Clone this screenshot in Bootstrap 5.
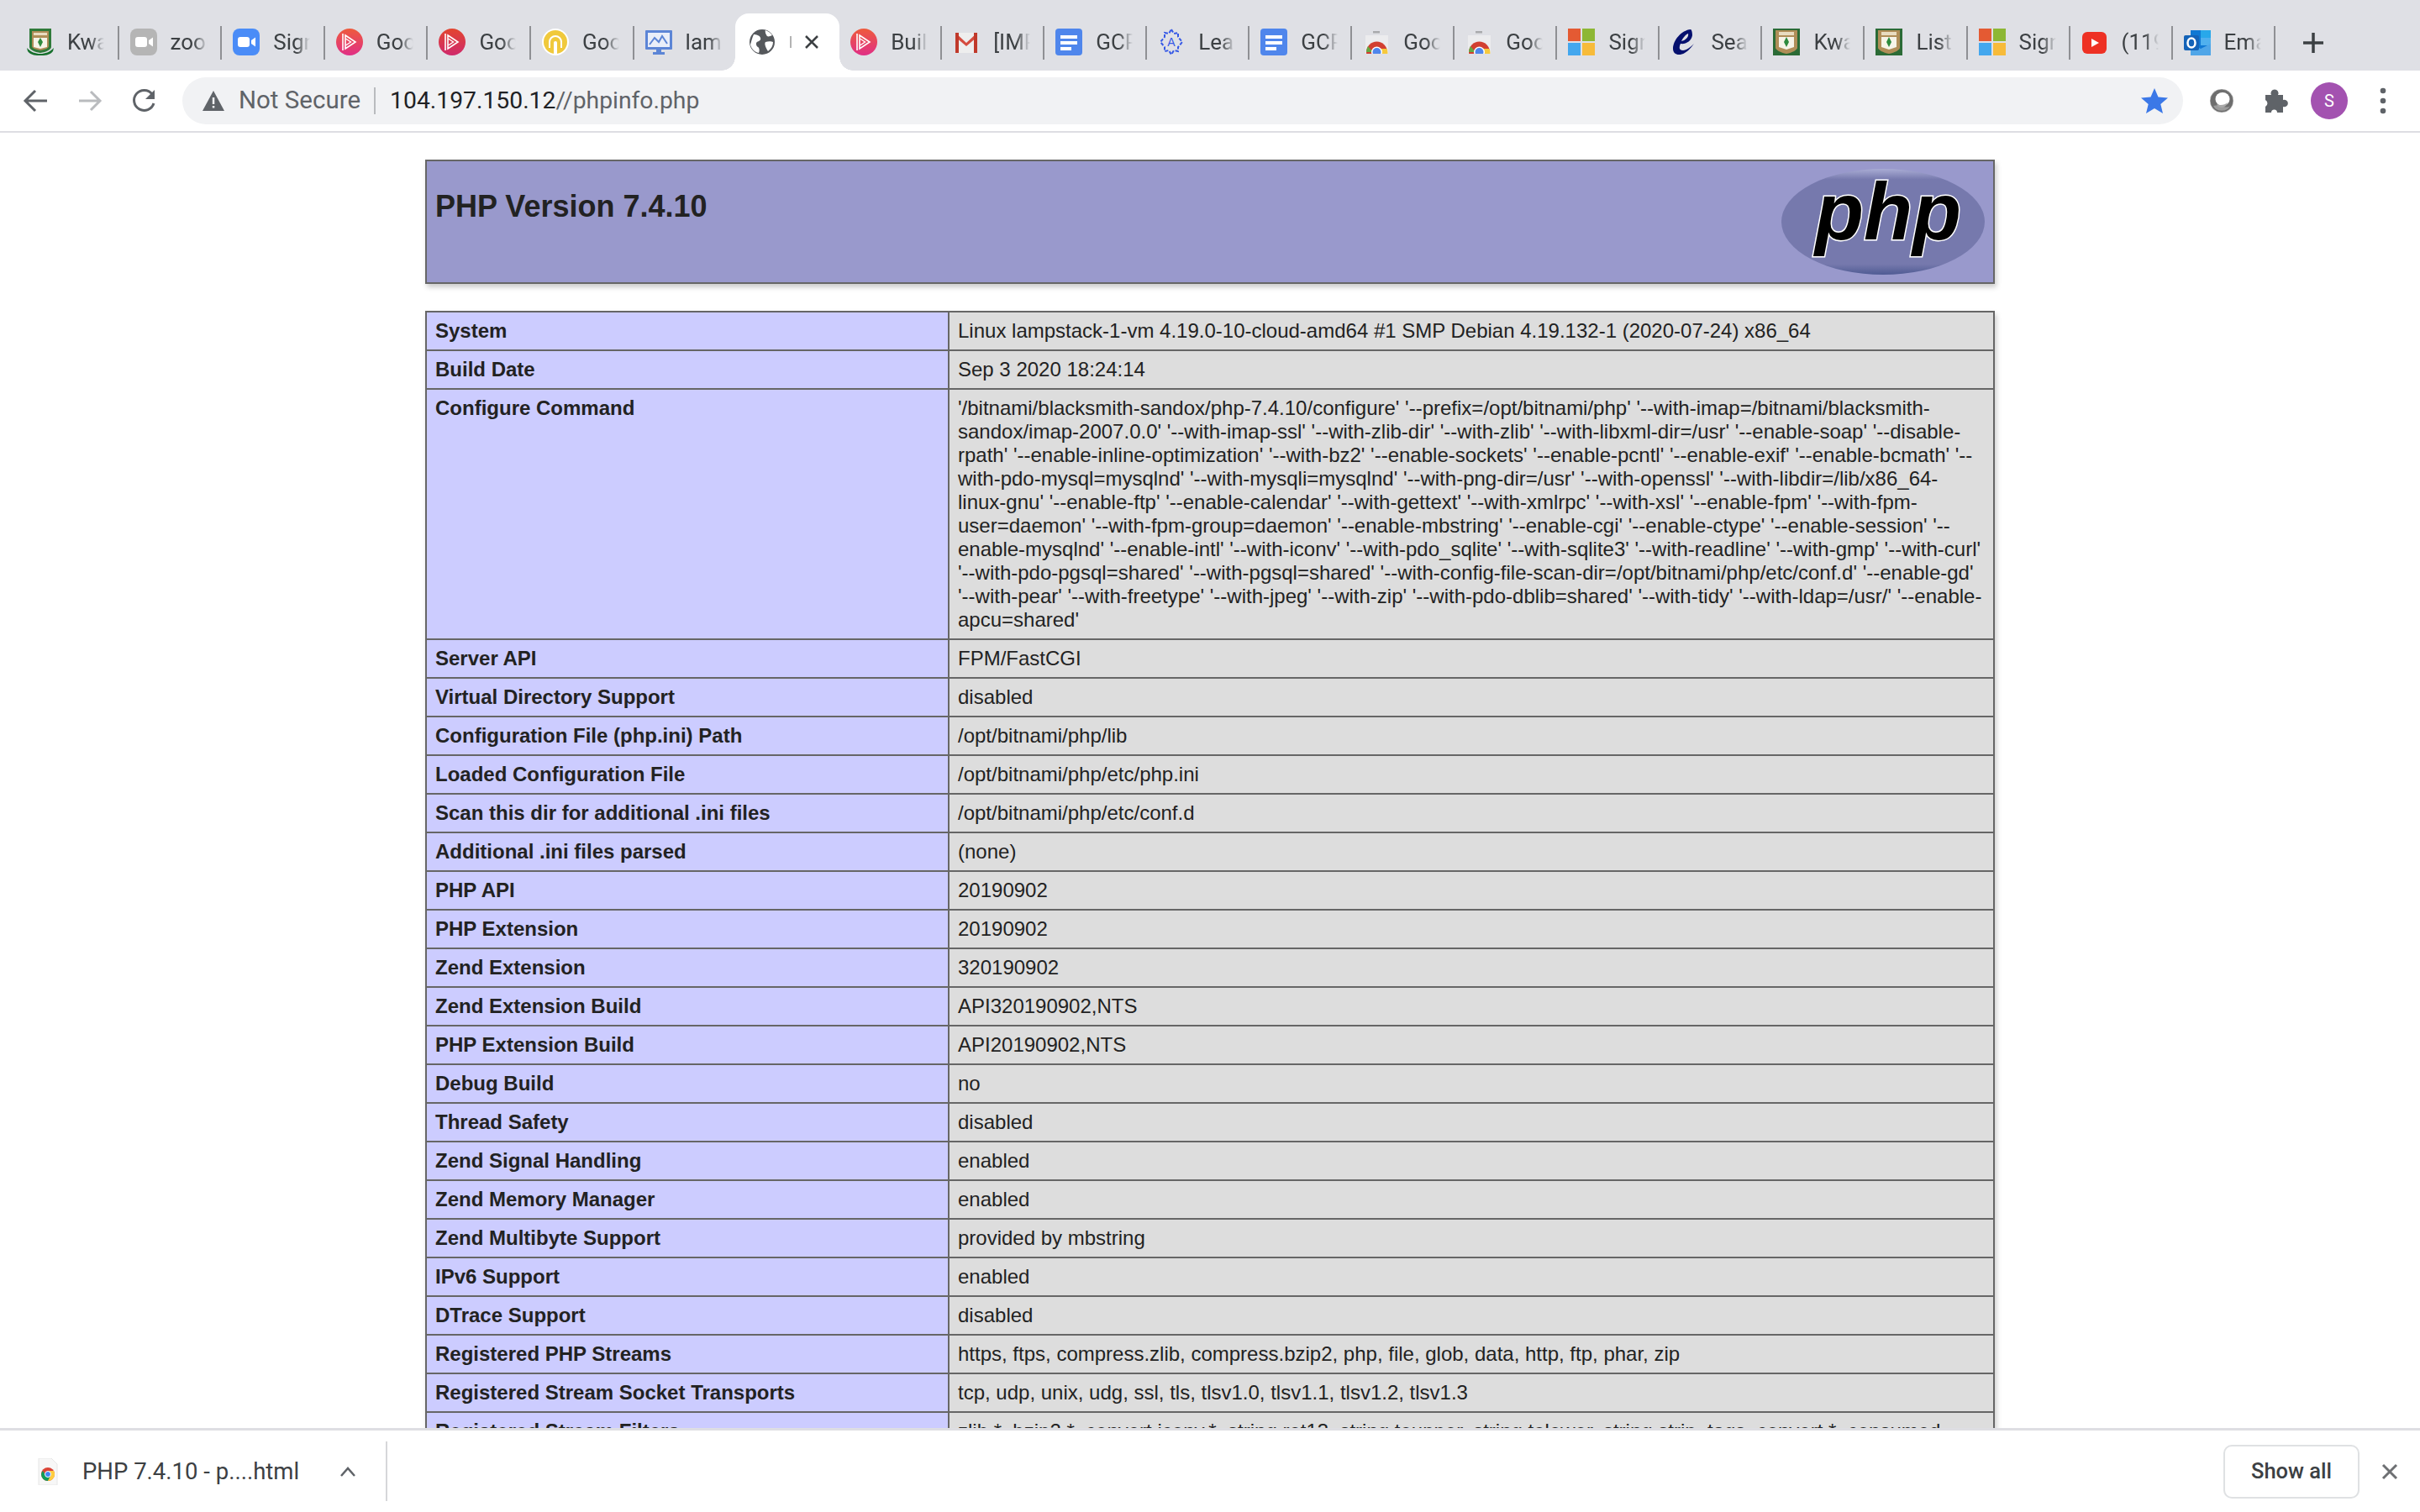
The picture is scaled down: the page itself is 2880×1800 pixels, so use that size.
<!DOCTYPE html>
<html lang="en">
<head>
<meta charset="utf-8">
<title>PHP 7.4.10 - phpinfo()</title>
<link href="https://cdn.jsdelivr.net/npm/bootstrap@5.3.0/dist/css/bootstrap.min.css" rel="stylesheet">
<script src="https://cdn.jsdelivr.net/npm/bootstrap@5.3.0/dist/js/bootstrap.bundle.min.js"></script>
<style>
html,body{height:100%;margin:0;overflow:hidden;background:#fff}
body{font-family:"Liberation Sans",Arial,sans-serif;color:#222}
.shell{height:1800px}
.tabstrip{height:84px;background:#dfe0e5;padding:16px 0 0 19px;flex:none}
.tabitem{flex:0 0 120.6px;height:68px;padding-left:13px;gap:16px;position:relative}
.tabitem.on ~ .tabitem{flex-basis:120.04px}
.tabsep{flex:0 0 2px;width:2px;height:40px;margin-top:15px;background:#8f9094}
.tabico{width:32px;height:32px;flex:none;display:block}
.tablabel{width:44px;overflow:hidden;white-space:nowrap;font-size:26px;color:#3c4043;font-family:"Roboto","Liberation Sans",sans-serif;-webkit-mask-image:linear-gradient(90deg,#000 62%,transparent 100%);mask-image:linear-gradient(90deg,#000 62%,transparent 100%)}
.tabitem.on{background:#fff;border-radius:16px 16px 0 0;margin-left:-2px;flex-basis:124px;padding-left:16px;gap:17px}
.tabitem.on::before,.tabitem.on::after{content:"";position:absolute;bottom:0;width:16px;height:16px}
.tabitem.on::before{left:-16px;background:radial-gradient(circle at 0 0,transparent 15.5px,#fff 16px)}
.tabitem.on::after{right:-16px;background:radial-gradient(circle at 100% 0,transparent 15.5px,#fff 16px)}
.tabsep.none{background:transparent}
.newtab{margin-left:32px;margin-top:22px;width:26px;height:26px}
.toolbar{height:74px;flex:none;background:#fff;border-bottom:2px solid #dedee3;padding:8px 0 8px 26px;position:relative}
.navico{width:32px;height:32px;flex:none;display:block}
.navico + .navico{margin-left:33px}
.omni{flex:none;width:2381px;height:56px;background:#f1f2f4;border-radius:28px;margin-left:29px;padding-left:23px;padding-right:18px}
.notsec{font-family:"Roboto","Liberation Sans",sans-serif;font-size:29.5px;color:#5f6368;margin-left:16px;line-height:1}
.omnidiv{width:2px;height:32px;background:#b9bbbe;margin:0 17px 0 16px}
.urltxt{font-family:"Roboto","Liberation Sans",sans-serif;font-size:28.3px;color:#5f6368;line-height:1}
.urltxt b{font-weight:400;color:#202124}
.ringico{margin-left:31px;flex:none}
.puzico{margin-left:33px;flex:none}
.avatar{width:44px;height:44px;border-radius:50%;background:#a352b0;color:#fff;font-size:20px;font-family:"Roboto",sans-serif;margin-left:26px;flex:none}
.dotsico{margin-left:37px;flex:none}
.viewport{flex:1 1 auto;min-height:0;overflow:hidden;background:#fff;padding-top:32px}
.phpwrap{width:1868px;margin:0 auto 0 506px}
.phphead{height:148px;background:#99c;border:2px solid #666;box-shadow:2px 4px 6px #ccc;padding:0 9px 0 10px;margin-bottom:32px}
.phphead h1{font-size:36px;line-height:42px;font-weight:700;margin:0;padding-top:33px;color:#222}
.phptbl{width:1868px;table-layout:fixed;border-collapse:collapse;box-shadow:2px 4px 6px #ccc;font-size:24px;line-height:28px;color:#222}
.phptbl td{border:2px solid #666;padding:8px 10px;vertical-align:baseline;overflow-wrap:break-word}
.phptbl .ekey{width:622px;background:#ccf;font-weight:700}
.phptbl .vval{background:#ddd}
.dlbar{height:100px;flex:none;background:#fff;border-top:3px solid #dedee3;position:relative;padding-left:45px}
.dlname{font-family:"Roboto","Liberation Sans",sans-serif;font-size:27.5px;color:#3c4043;margin-left:29px;white-space:nowrap}
.dlchev{margin-left:48px;flex:none}
.dldiv{width:2px;height:71px;background:#d6d7d9;margin-left:35px}
.showall{width:162px;height:64px;border:2px solid #dfe1e3;border-radius:10px;background:#fff;font-family:"Roboto",sans-serif;font-weight:500;font-size:25.5px;color:#3c4043;padding:0}
.dlclose{margin:0 26px;flex:none}
</style>
</head>
<body>
<svg width="0" height="0" class="d-block position-absolute">
<defs>
<symbol id="i-crest" viewBox="0 0 32 32"><path d="M3 0h26v22c0 3-6 6-13 7-7-1-13-4-13-7z" fill="#2f7a3a"/><path d="M6 3h20v18c0 2-4 4-10 5-6-1-10-3-10-5z" fill="#b08e58"/><rect x="8" y="5" width="16" height="3" fill="#e8dcc0"/><path d="M8 11h16v11l-8 2-8-2z" fill="#f6f4e8"/><path d="M16 11l3 5-3 6-3-6z" fill="#2e8b3e"/><path d="M0 23c5 5 10 7 16 7s11-2 16-7l-1 4c-4 5-10 5-15 5s-11 0-15-5z" fill="#17702d"/></symbol>
<symbol id="i-crest2" viewBox="0 0 32 32"><rect width="32" height="32" fill="#2b6b36"/><path d="M3 2h26v21c0 2-6 6-13 7-7-1-13-5-13-7z" fill="#b08e58"/><rect x="7" y="4" width="18" height="4" fill="#e8dcc0"/><path d="M7 10h18v12l-9 3-9-3z" fill="#f6f4e8"/><path d="M16 10l3 6-3 6-3-6z" fill="#2e8b3e"/></symbol>
<symbol id="i-zoomg" viewBox="0 0 32 32"><rect width="32" height="32" rx="8" fill="#b5b5b5"/><rect x="6" y="10" width="14" height="12" rx="3" fill="#fff"/><path d="M22 14l5-3.500v11L22 18z" fill="#fff"/></symbol>
<symbol id="i-zoomb" viewBox="0 0 32 32"><rect width="32" height="32" rx="8" fill="#4a8cf7"/><rect x="6" y="10" width="14" height="12" rx="3" fill="#fff"/><path d="M22 14l5-3.500v11L22 18z" fill="#fff"/></symbol>
<symbol id="i-plur" viewBox="0 0 32 32"><defs><linearGradient id="gp" x1="0" y1="0" x2="0" y2="1"><stop offset="0" stop-color="#ee5b3c"/><stop offset="1" stop-color="#e02f86"/></linearGradient></defs><circle cx="16" cy="16" r="16" fill="url(#gp)"/><path d="M11 8l12 8-12 8zM8 6v20" fill="none" stroke="#fff" stroke-width="1.600"/><path d="M11.500 12l6 4-6 4" fill="none" stroke="#fff" stroke-width="1.400"/></symbol>
<symbol id="i-plur2" viewBox="0 0 32 32"><defs><linearGradient id="gq" x1="0" y1="0" x2="0" y2="1"><stop offset="0" stop-color="#e2452f"/><stop offset="1" stop-color="#cf2a6c"/></linearGradient></defs><circle cx="16" cy="16" r="16" fill="url(#gq)"/><path d="M11 8l12 8-12 8zM8 6v20" fill="none" stroke="#fff" stroke-width="1.600"/><path d="M11.500 12l6 4-6 4" fill="none" stroke="#fff" stroke-width="1.400"/></symbol>
<symbol id="i-yellow" viewBox="0 0 32 32"><circle cx="16" cy="16" r="16" fill="#fff"/><circle cx="16" cy="16" r="14" fill="#f0c93c"/><path d="M9 23v-7a7 7 0 0 1 14 0v7" fill="none" stroke="#fff" stroke-width="2"/><path d="M14 30V17a2 2 0 0 1 4 0v13z" fill="#fff"/></symbol>
<symbol id="i-mon" viewBox="0 0 32 32"><rect x="0" y="2" width="32" height="23" rx="1" fill="#5c85d6"/><rect x="3" y="5" width="26" height="17" fill="#e9eef9"/><path d="M5 19l6-8 5 5 4-7 6 9" fill="none" stroke="#5c85d6" stroke-width="2"/><rect x="13" y="25" width="6" height="3" fill="#5c85d6"/><rect x="9" y="28" width="14" height="3" fill="#5c85d6"/></symbol>
<symbol id="i-globe" viewBox="0 0 32 32"><circle cx="16" cy="16" r="15" fill="#55585c"/><path d="M6 7c3 0 7 1 8 4s-2 4-4 5-1 5 1 6 2 5 1 7c-5-1-9-5-10-10 1-3 2-8 4-12zM20 2c3 1 6 3 8 6-2 1-5 2-6 1s-3-5-2-7zM20 16c3-1 7-1 9 0 0 4-2 8-6 11-2-3-5-9-3-11z" fill="#fff"/></symbol>
<symbol id="i-gmail" viewBox="0 0 32 32"><path d="M3 5h26v24H3z" fill="#eeeeee"/><path d="M3 5l13 12L29 5v5L16 21 3 10z" fill="#d54c3f"/><path d="M3 5h4v24H3zM25 5h4v24h-4z" fill="#c0392b"/></symbol>
<symbol id="i-doc" viewBox="0 0 32 32"><rect width="32" height="32" rx="4" fill="#4f86ec"/><rect x="6" y="8" width="20" height="4" fill="#fff"/><rect x="6" y="15" width="20" height="4" fill="#fff"/><rect x="6" y="22" width="13" height="4" fill="#fff"/></symbol>
<symbol id="i-lead" viewBox="0 0 32 32"><path d="M16 1l3 5 5-1v5l5 6-5 6v5l-5-1-3 5-3-5-5 1v-5l-5-6 5-6V5l5 1z" fill="none" stroke="#3558e6" stroke-width="2" stroke-dasharray="4 2"/><text x="16" y="21" text-anchor="middle" font-size="14" font-family="Liberation Sans" fill="#3558e6">A</text></symbol>
<symbol id="i-cr" viewBox="0 0 32 32"><rect x="3" y="8" width="27" height="22" fill="#ececee"/><rect x="12" y="3" width="8" height="2.500" fill="#a9aaad"/><clipPath id="crclip"><rect x="3" y="8" width="27" height="22"/></clipPath><g clip-path="url(#crclip)"><circle cx="16.500" cy="28" r="12.500" fill="#d23f31"/><path d="M16.500 28L4 28a12.500 12.500 0 0 1 2-7l6 7v4H4z" fill="#65a844"/><path d="M16.500 24h12a12.500 12.500 0 0 1 .5 8h-8z" fill="#f6c93d"/><circle cx="16.500" cy="28" r="6.500" fill="#fff"/><circle cx="16.500" cy="28" r="5" fill="#4f86ec"/></g></symbol>
<symbol id="i-ms" viewBox="0 0 32 32"><rect width="15" height="15" fill="#e45a33"/><rect x="17" width="15" height="15" fill="#8db735"/><rect y="17" width="15" height="15" fill="#43a7ee"/><rect x="17" y="17" width="15" height="15" fill="#f7bb3a"/></symbol>
<symbol id="i-e" viewBox="0 0 32 32"><path d="M24 1C13 2 3 14 3 24c0 7 7 9 14 5 4-2 8-7 11-11-4 4-9 8-13 8-5 0-5-4-3-8 6 1 13-3 14-10 0-4-1-7-2-7zM13 15c2-4 5-8 8-9 1 4-3 8-8 9z" fill="#05106e"/></symbol>
<symbol id="i-yt" viewBox="0 0 32 32"><rect x="1" y="4" width="29" height="26" rx="6" fill="#ee3124"/><path d="M12 12l9 5-9 5z" fill="#fff"/></symbol>
<symbol id="i-ol" viewBox="0 0 32 32"><rect x="8" y="2" width="24" height="30" fill="#0f78d4"/><rect x="20" y="2" width="12" height="9" fill="#28a8ea"/><rect x="20" y="11" width="12" height="9" fill="#50b0ee"/><path d="M8 18l12 6 12-6v14H8z" fill="#50a6e8"/><rect x="0" y="8" width="18" height="18" rx="2" fill="#1463b8"/><ellipse cx="9" cy="17" rx="4.500" ry="5.500" fill="none" stroke="#fff" stroke-width="2.500"/></symbol>
</defs>
</svg>

<div class="shell d-flex flex-column">
  <div class="tabstrip d-flex align-items-start">
    <div class="tabitem d-flex align-items-center"><svg class="tabico"><use href="#i-crest"/></svg><span class="tablabel">Kwara</span></div><span class="tabsep"></span>
    <div class="tabitem d-flex align-items-center"><svg class="tabico"><use href="#i-zoomg"/></svg><span class="tablabel">zoom</span></div><span class="tabsep"></span>
    <div class="tabitem d-flex align-items-center"><svg class="tabico"><use href="#i-zoomb"/></svg><span class="tablabel">Sign in</span></div><span class="tabsep"></span>
    <div class="tabitem d-flex align-items-center"><svg class="tabico"><use href="#i-plur"/></svg><span class="tablabel">Google</span></div><span class="tabsep"></span>
    <div class="tabitem d-flex align-items-center"><svg class="tabico"><use href="#i-plur2"/></svg><span class="tablabel">Google</span></div><span class="tabsep"></span>
    <div class="tabitem d-flex align-items-center"><svg class="tabico"><use href="#i-yellow"/></svg><span class="tablabel">Google</span></div><span class="tabsep"></span>
    <div class="tabitem d-flex align-items-center"><svg class="tabico"><use href="#i-mon"/></svg><span class="tablabel">lampstack</span></div><span class="tabsep none"></span>
    <div class="tabitem on d-flex align-items-center"><svg class="tabico"><use href="#i-globe"/></svg><svg width="34" height="32" viewBox="0 0 34 32" class="flex-shrink-0" aria-hidden="true"><path d="M1 9v14" stroke="#9a9a9a" stroke-width="1.500"/><path d="M19 9l14 14M33 9L19 23" stroke="#3c4043" stroke-width="2.500"/></svg></div>
    <div class="tabitem d-flex align-items-center"><svg class="tabico"><use href="#i-plur"/></svg><span class="tablabel">Build</span></div><span class="tabsep"></span>
    <div class="tabitem d-flex align-items-center"><svg class="tabico"><use href="#i-gmail"/></svg><span class="tablabel">[IMPORTANT]</span></div><span class="tabsep"></span>
    <div class="tabitem d-flex align-items-center"><svg class="tabico"><use href="#i-doc"/></svg><span class="tablabel">GCP</span></div><span class="tabsep"></span>
    <div class="tabitem d-flex align-items-center"><svg class="tabico"><use href="#i-lead"/></svg><span class="tablabel">Learn</span></div><span class="tabsep"></span>
    <div class="tabitem d-flex align-items-center"><svg class="tabico"><use href="#i-doc"/></svg><span class="tablabel">GCP</span></div><span class="tabsep"></span>
    <div class="tabitem d-flex align-items-center"><svg class="tabico"><use href="#i-cr"/></svg><span class="tablabel">Google</span></div><span class="tabsep"></span>
    <div class="tabitem d-flex align-items-center"><svg class="tabico"><use href="#i-cr"/></svg><span class="tablabel">Google</span></div><span class="tabsep"></span>
    <div class="tabitem d-flex align-items-center"><svg class="tabico"><use href="#i-ms"/></svg><span class="tablabel">Sign in</span></div><span class="tabsep"></span>
    <div class="tabitem d-flex align-items-center"><svg class="tabico"><use href="#i-e"/></svg><span class="tablabel">Search</span></div><span class="tabsep"></span>
    <div class="tabitem d-flex align-items-center"><svg class="tabico"><use href="#i-crest2"/></svg><span class="tablabel">Kwara</span></div><span class="tabsep"></span>
    <div class="tabitem d-flex align-items-center"><svg class="tabico"><use href="#i-crest2"/></svg><span class="tablabel">List</span></div><span class="tabsep"></span>
    <div class="tabitem d-flex align-items-center"><svg class="tabico"><use href="#i-ms"/></svg><span class="tablabel">Sign in</span></div><span class="tabsep"></span>
    <div class="tabitem d-flex align-items-center"><svg class="tabico"><use href="#i-yt"/></svg><span class="tablabel">(119)</span></div><span class="tabsep"></span>
    <div class="tabitem d-flex align-items-center"><svg class="tabico"><use href="#i-ol"/></svg><span class="tablabel">Email</span></div><span class="tabsep"></span>
    <svg class="newtab" viewBox="0 0 26 26"><path d="M13 1v24M1 13h24" stroke="#3c4043" stroke-width="3.500"/></svg>
  </div>

  <div class="toolbar d-flex align-items-center">
    <svg class="navico" viewBox="0 0 32 32"><path d="M30 16H6M16 4L4 16l12 12" fill="none" stroke="#5f6368" stroke-width="3"/></svg>
    <svg class="navico" viewBox="0 0 32 32"><path d="M3 16h24M17 5l11 11-11 11" fill="none" stroke="#b9bbbe" stroke-width="3"/></svg>
    <svg class="navico" viewBox="0 0 32 32"><path d="M27 19a12 12 0 1 1-2-11" fill="none" stroke="#5f6368" stroke-width="3"/><path d="M28 3v11H17z" fill="#5f6368"/></svg>
    <div class="omni d-flex align-items-center">
      <svg width="28" height="26" viewBox="0 0 28 26" class="flex-shrink-0"><path d="M14 1l13 24H1z" fill="#5f6368"/><rect x="12.800" y="9" width="2.500" height="8" fill="#f1f2f4"/><rect x="12.800" y="19" width="2.500" height="2.500" fill="#f1f2f4"/></svg>
      <span class="notsec">Not Secure</span><span class="omnidiv"></span>
      <span class="urltxt"><b>104.197.150.12</b>//phpinfo.php</span>
      <svg width="32" height="30" viewBox="0 0 32 30" class="ms-auto"><path d="M16 0l4.500 10.500 11.500 1-8.700 7.500 2.700 11L16 24l-10 6 2.700-11L0 11.500l11.500-1z" fill="#3b78e7"/></svg>
    </div>
    <svg width="30" height="30" viewBox="0 0 30 30" class="ringico"><circle cx="15" cy="15" r="14" fill="#6e6e6e"/><circle cx="15" cy="15" r="14" fill="none" stroke="#fff" stroke-width=".5"/><path d="M5 21a11 10 0 0 0 20 0c-3 3-8 1-10 0-3-1-6-1-10 0z" fill="#9b9b9b"/><ellipse cx="16" cy="13" rx="8.500" ry="8" fill="#fff"/><path d="M9 19c4 2 10 1 13-2-1 4-4 6-8 6-2 0-4-1-5-4z" fill="#a8a8a8"/></svg>
    <svg width="32" height="30" viewBox="0 0 32 30" class="puzico"><path d="M4 8h7a4.500 4.500 0 1 1 8 0h6v6a4.300 4.300 0 1 1 0 8v7h-7a3.500 3.500 0 0 0-7 0H4v-7a4.500 4.500 0 0 0 0-8z" fill="#5f6368"/></svg>
    <div class="avatar d-flex align-items-center justify-content-center">S</div>
    <svg width="10" height="32" viewBox="0 0 10 32" class="dotsico"><circle cx="5" cy="4" r="3.300" fill="#5f6368"/><circle cx="5" cy="16" r="3.300" fill="#5f6368"/><circle cx="5" cy="28" r="3.300" fill="#5f6368"/></svg>
  </div>

  <div class="viewport">
    <div class="phpwrap">
      <div class="phphead d-flex justify-content-between align-items-start">
        <h1>PHP Version 7.4.10</h1>
        <svg width="244" height="128" viewBox="0 0 244 128" class="flex-shrink-0 mt-2" aria-label="PHP logo">
          <defs><linearGradient id="phpedge" x1="0" y1="0" x2="0" y2="1"><stop offset="0" stop-color="#a9acd4"/><stop offset=".1" stop-color="#7679ad"/><stop offset=".9" stop-color="#7679ad"/><stop offset="1" stop-color="#4f5b93"/></linearGradient></defs>
          <ellipse cx="122" cy="64" rx="121" ry="63" fill="url(#phpedge)"/>
          <text x="41" y="85" font-family="Liberation Sans,Arial,sans-serif" font-weight="700" font-style="italic" font-size="96" textLength="174" lengthAdjust="spacingAndGlyphs" fill="#000" stroke="#fff" stroke-width="3" paint-order="stroke">php</text>
        </svg>
      </div>
      <table class="phptbl">
        <tbody>
          <tr><td class="ekey">System</td><td class="vval">Linux lampstack-1-vm 4.19.0-10-cloud-amd64 #1 SMP Debian 4.19.132-1 (2020-07-24) x86_64</td></tr>
          <tr><td class="ekey">Build Date</td><td class="vval">Sep 3 2020 18:24:14</td></tr>
          <tr><td class="ekey">Configure Command</td><td class="vval">'/bitnami/blacksmith-sandox/php-7.4.10/configure' '--prefix=/opt/bitnami/php' '--with-imap=/bitnami/blacksmith-sandox/imap-2007.0.0' '--with-imap-ssl' '--with-zlib-dir' '--with-zlib' '--with-libxml-dir=/usr' '--enable-soap' '--disable-rpath' '--enable-inline-optimization' '--with-bz2' '--enable-sockets' '--enable-pcntl' '--enable-exif' '--enable-bcmath' '--with-pdo-mysql=mysqlnd' '--with-mysqli=mysqlnd' '--with-png-dir=/usr' '--with-openssl' '--with-libdir=/lib/x86_64-linux-gnu' '--enable-ftp' '--enable-calendar' '--with-gettext' '--with-xmlrpc' '--with-xsl' '--enable-fpm' '--with-fpm-user=daemon' '--with-fpm-group=daemon' '--enable-mbstring' '--enable-cgi' '--enable-ctype' '--enable-session' '--enable-mysqlnd' '--enable-intl' '--with-iconv' '--with-pdo_sqlite' '--with-sqlite3' '--with-readline' '--with-gmp' '--with-curl' '--with-pdo-pgsql=shared' '--with-pgsql=shared' '--with-config-file-scan-dir=/opt/bitnami/php/etc/conf.d' '--enable-gd' '--with-pear' '--with-freetype' '--with-jpeg' '--with-zip' '--with-pdo-dblib=shared' '--with-tidy' '--with-ldap=/usr/' '--enable-apcu=shared'</td></tr>
          <tr><td class="ekey">Server API</td><td class="vval">FPM/FastCGI</td></tr>
          <tr><td class="ekey">Virtual Directory Support</td><td class="vval">disabled</td></tr>
          <tr><td class="ekey">Configuration File (php.ini) Path</td><td class="vval">/opt/bitnami/php/lib</td></tr>
          <tr><td class="ekey">Loaded Configuration File</td><td class="vval">/opt/bitnami/php/etc/php.ini</td></tr>
          <tr><td class="ekey">Scan this dir for additional .ini files</td><td class="vval">/opt/bitnami/php/etc/conf.d</td></tr>
          <tr><td class="ekey">Additional .ini files parsed</td><td class="vval">(none)</td></tr>
          <tr><td class="ekey">PHP API</td><td class="vval">20190902</td></tr>
          <tr><td class="ekey">PHP Extension</td><td class="vval">20190902</td></tr>
          <tr><td class="ekey">Zend Extension</td><td class="vval">320190902</td></tr>
          <tr><td class="ekey">Zend Extension Build</td><td class="vval">API320190902,NTS</td></tr>
          <tr><td class="ekey">PHP Extension Build</td><td class="vval">API20190902,NTS</td></tr>
          <tr><td class="ekey">Debug Build</td><td class="vval">no</td></tr>
          <tr><td class="ekey">Thread Safety</td><td class="vval">disabled</td></tr>
          <tr><td class="ekey">Zend Signal Handling</td><td class="vval">enabled</td></tr>
          <tr><td class="ekey">Zend Memory Manager</td><td class="vval">enabled</td></tr>
          <tr><td class="ekey">Zend Multibyte Support</td><td class="vval">provided by mbstring</td></tr>
          <tr><td class="ekey">IPv6 Support</td><td class="vval">enabled</td></tr>
          <tr><td class="ekey">DTrace Support</td><td class="vval">disabled</td></tr>
          <tr><td class="ekey">Registered PHP Streams</td><td class="vval">https, ftps, compress.zlib, compress.bzip2, php, file, glob, data, http, ftp, phar, zip</td></tr>
          <tr><td class="ekey">Registered Stream Socket Transports</td><td class="vval">tcp, udp, unix, udg, ssl, tls, tlsv1.0, tlsv1.1, tlsv1.2, tlsv1.3</td></tr>
          <tr><td class="ekey">Registered Stream Filters</td><td class="vval">zlib.*, bzip2.*, convert.iconv.*, string.rot13, string.toupper, string.tolower, string.strip_tags, convert.*, consumed, dechunk</td></tr>
        </tbody>
      </table>
    </div>
  </div>

  <div class="dlbar d-flex align-items-center">
    <svg width="24" height="32" viewBox="0 0 24 32" class="flex-shrink-0"><path d="M1 0h15l7 7v25H1z" fill="#f7f7f7" stroke="#e6e6e6"/><circle cx="12" cy="19" r="8" fill="#db4437"/><path d="M4 19a8 8 0 0 0 8 8l3-6-6-1-3-5a8 8 0 0 0-2 4z" fill="#0f9d58"/><path d="M12 27a8 8 0 0 0 7-12h-6l2 6z" fill="#ffcd40"/><circle cx="12" cy="19" r="3.500" fill="#4285f4" stroke="#fff"/></svg>
    <span class="dlname">PHP 7.4.10 - p....html</span>
    <svg width="20" height="12" viewBox="0 0 20 12" class="dlchev"><path d="M2 11l8-9 8 9" fill="none" stroke="#5f6368" stroke-width="2.500"/></svg>
    <span class="dldiv"></span>
    <button type="button" class="btn showall ms-auto">Show all</button>
    <svg width="20" height="20" viewBox="0 0 20 20" class="dlclose"><path d="M2 2l16 16M18 2L2 18" stroke="#6e7073" stroke-width="3"/></svg>
  </div>
</div>
</body>
</html>
